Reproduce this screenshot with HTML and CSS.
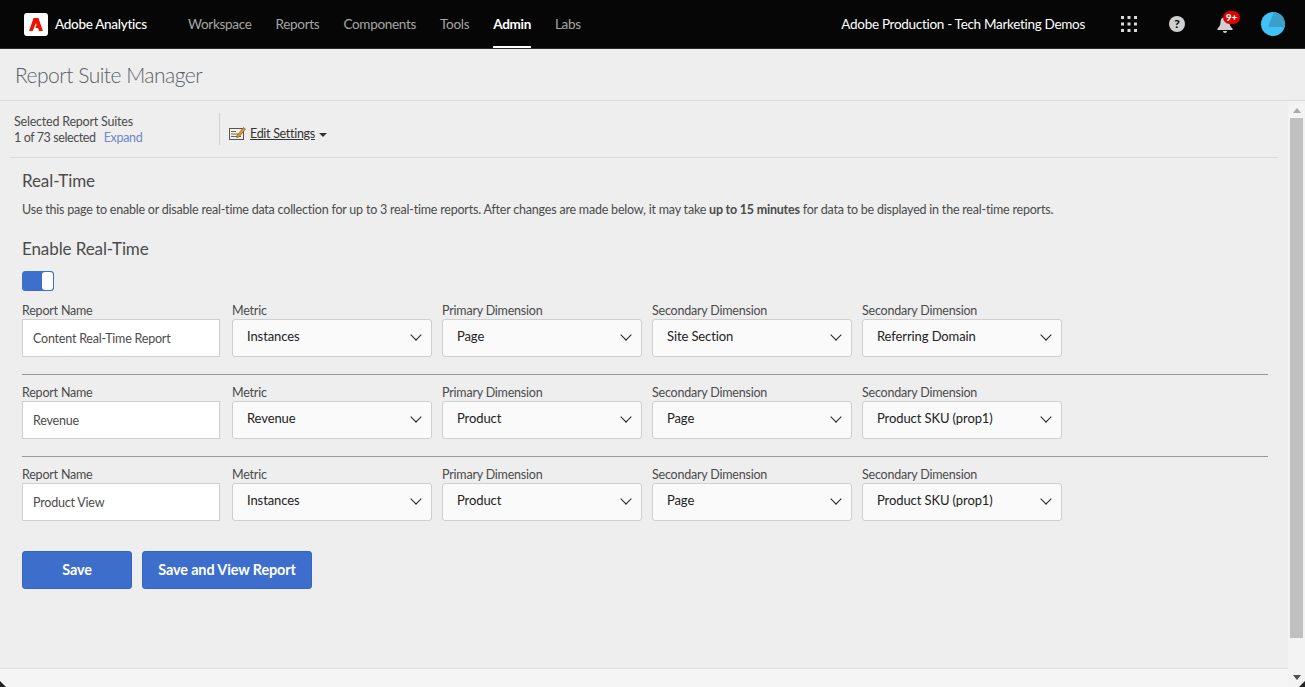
FILE: index.html
```html
<!DOCTYPE html>
<html lang="en">
<head>
    <meta charset="UTF-8">
    <meta name="viewport" content="width=device-width, initial-scale=1.0">
    <title>Report Suite Manager</title>
    <link rel="stylesheet" href="styles.css">
</head>
<body>
    <header class="topbar">
        <div class="brand">
            <span class="brand-logo">
                <svg width="14" height="13" viewBox="0 0 16 15"><path fill="#eb1000" d="M5.200 0H10.800L16 15H11.500L10.300 11.400H7.200L8.600 8 8 5.800 4.200 15H0z"/></svg>
            </span>
            <span class="brand-name">Adobe Analytics</span>
        </div>
        <nav class="main-nav">
            <a href="#">Workspace</a>
            <a href="#">Reports</a>
            <a href="#">Components</a>
            <a href="#">Tools</a>
            <a href="#" class="active">Admin</a>
            <a href="#">Labs</a>
        </nav>
        <div class="top-right">
            <span class="org-name">Adobe Production - Tech Marketing Demos</span>
            <svg class="icon-apps" width="16" height="16" viewBox="0 0 16 16" fill="#d8d8d8">
                <rect x="0" y="0" width="3" height="3"/><rect x="6.500" y="0" width="3" height="3"/><rect x="13" y="0" width="3" height="3"/>
                <rect x="0" y="6.500" width="3" height="3"/><rect x="6.500" y="6.500" width="3" height="3"/><rect x="13" y="6.500" width="3" height="3"/>
                <rect x="0" y="13" width="3" height="3"/><rect x="6.500" y="13" width="3" height="3"/><rect x="13" y="13" width="3" height="3"/>
            </svg>
            <span class="icon-help">?</span>
            <span class="bell">
                <svg width="16" height="16" viewBox="0 0 16 16" fill="#d0d0d0"><path d="M8 0C5 0 3.500 2.400 3.500 5.500c0 3-1.300 4.400-3 6V13h15v-1.500c-1.700-1.600-3-3-3-6C12.500 2.400 11 0 8 0zM6 14h4c0 1.200-.9 2-2 2s-2-.8-2-2z"/></svg>
                <span class="badge">9+</span>
            </span>
            <svg class="avatar" width="24" height="24" viewBox="0 0 24 24"><circle cx="12" cy="12" r="12" fill="#3fc3f7"/><path fill="#3a9fc9" d="M13 0A12 12 0 0 1 24 12V15H7z"/></svg>
        </div>
    </header>

    <div class="page-title">Report Suite Manager</div>

    <div class="body-wrap">
        <div class="left-col">
            <main class="content">
                <div class="toolbar">
                    <div class="selected-suites">
                        <div>Selected Report Suites</div>
                        <div><span class="count">1 of 73 selected</span> <a href="#" class="expand">Expand</a></div>
                    </div>
                    <div class="edit-settings">
                        <svg width="17" height="14" viewBox="0 0 17 14">
                            <rect x=".5" y="2.500" width="14" height="11" fill="#f4f1e6" stroke="#555"/>
                            <path stroke="#666" d="M2 5.500h5M2 8h8M2 10.500h10"/>
                            <path fill="#e0962c" stroke="#7a4a12" stroke-width=".6" d="M8 9.500 14.500 1.500l2 1.500L10 11l-2.300.6z"/>
                        </svg>
                        <a href="#">Edit Settings</a>
                        <span class="caret"></span>
                    </div>
                </div>

                <section class="realtime">
                    <h2>Real-Time</h2>
                    <p class="intro">Use this page to enable or disable real-time data collection for up to 3 real-time reports. After changes are made below, it may take <b>up to 15 minutes</b> for data to be displayed in the real-time reports.</p>
                    <h2 class="enable-title">Enable Real-Time</h2>
                    <div class="toggle"><span class="toggle-knob"></span></div>

                    <div class="report-row">
                        <label>Report Name<input type="text" value="Content Real-Time Report"></label>
                        <label>Metric<span class="select">Instances</span></label>
                        <label>Primary Dimension<span class="select">Page</span></label>
                        <label>Secondary Dimension<span class="select">Site Section</span></label>
                        <label>Secondary Dimension<span class="select">Referring Domain</span></label>
                    </div>
                    <div class="report-row">
                        <label>Report Name<input type="text" value="Revenue"></label>
                        <label>Metric<span class="select">Revenue</span></label>
                        <label>Primary Dimension<span class="select">Product</span></label>
                        <label>Secondary Dimension<span class="select">Page</span></label>
                        <label>Secondary Dimension<span class="select">Product SKU (prop1)</span></label>
                    </div>
                    <div class="report-row last">
                        <label>Report Name<input type="text" value="Product View"></label>
                        <label>Metric<span class="select">Instances</span></label>
                        <label>Primary Dimension<span class="select">Product</span></label>
                        <label>Secondary Dimension<span class="select">Page</span></label>
                        <label>Secondary Dimension<span class="select">Product SKU (prop1)</span></label>
                    </div>

                    <div class="actions">
                        <button class="btn btn-save">Save</button>
                        <button class="btn btn-view">Save and View Report</button>
                    </div>
                </section>
            </main>
            <footer class="footer"></footer>
        </div>
        <aside class="scrollbar">
            <span class="arrow-up"></span>
            <span class="thumb"></span>
            <span class="arrow-down"></span>
        </aside>
    </div>
    <span class="corner corner-left"></span>
    <span class="corner corner-right"></span>
</body>
</html>
```

FILE: styles.css
```css
* {
    box-sizing: border-box;
}
html, body {
    height: 100%;
}
body {
    font-family: Lato, "Open Sans", sans-serif;
    font-size: 12.500px;
    letter-spacing: -0.21px;
    margin: 0;
    padding: 0;
    color: #4b4b4b;
    background-color: #eeeeee;
    display: flex;
    flex-direction: column;
    overflow: hidden;
    position: relative;
}
a {
    text-decoration: none;
}
.topbar {
    height: 49px;
    flex: none;
    display: flex;
    align-items: stretch;
    background: #060606;
    border-bottom: 1px solid #2c2c2c;
    color: #fff;
    font-size: 13.500px;
    letter-spacing: -0.3px;
}
.brand {
    display: flex;
    align-items: center;
    padding-left: 24px;
    width: 188px;
}
.brand-logo {
    width: 24px;
    height: 23px;
    background: #fff;
    border-radius: 3px;
    display: flex;
    align-items: center;
    justify-content: center;
}
.brand-name {
    margin-left: 7px;
    font-weight: 500;
}
.main-nav {
    display: flex;
    gap: 24px;
}
.main-nav a {
    color: #a6a6a6;
    display: flex;
    align-items: center;
    height: 48px;
    padding-top: 2px;
    border-bottom: 2px solid transparent;
}
.main-nav a.active {
    color: #fff;
    font-weight: 700;
    border-bottom-color: #fff;
}
.top-right {
    margin-left: auto;
    display: flex;
    align-items: center;
    padding-right: 20px;
}
.org-name {
    margin-right: 36px;
}
.icon-help {
    width: 16px;
    height: 16px;
    margin-left: 32px;
    border-radius: 50%;
    background: #d0d0d0;
    color: #060606;
    font-weight: 900;
    font-size: 12px;
    line-height: 16px;
    text-align: center;
}
.bell {
    position: relative;
    margin-left: 32px;
    height: 16px;
    margin-top: 2px;
}
.badge {
    position: absolute;
    top: -6px;
    left: 6px;
    width: 17px;
    height: 13px;
    border-radius: 7px;
    background: #e00000;
    color: #fff;
    font-size: 10px;
    font-weight: 900;
    letter-spacing: 0;
    line-height: 13px;
    text-align: center;
}
.avatar {
    margin-left: 28px;
}
.page-title {
    height: 52px;
    flex: none;
    padding: 13px 0 0 15px;
    font-size: 21px;
    letter-spacing: -0.5px;
    font-weight: 300;
    color: #5a5f66;
    border-bottom: 1px solid #dcdcdc;
}
.body-wrap {
    flex: 1;
    min-height: 0;
    display: flex;
}
.left-col {
    flex: 1;
    min-width: 0;
    display: flex;
    flex-direction: column;
}
.content {
    flex: 1;
    min-height: 0;
}
.scrollbar {
    width: 17px;
    flex: none;
    display: flex;
    flex-direction: column;
    align-items: center;
    background: #f3f3f3;
    padding-top: 7px;
}
.arrow-up {
    border: 4px solid transparent;
    border-top: 0;
    border-bottom: 5px solid #a8a8a8;
}
.thumb {
    width: 13px;
    height: 520px;
    margin: 5px 0 0 0;
    background: #c0c0c0;
}
.arrow-down {
    margin-top: 37px;
    border: 4px solid transparent;
    border-bottom: 0;
    border-top: 5px solid #505050;
}
.corner {
    position: absolute;
    bottom: 0;
    width: 0;
    height: 0;
    border-bottom: 6px solid #222;
}
.corner-left {
    left: 0;
    border-right: 6px solid transparent;
}
.corner-right {
    right: 0;
    border-left: 6px solid transparent;
}
.toolbar {
    margin: 0 10px;
    height: 57px;
    border-bottom: 1px solid #dcdcdc;
    display: flex;
    align-items: center;
}
.selected-suites {
    width: 210px;
    padding: 1px 0 0 4px;
    line-height: 16px;
    height: 32px;
    border-right: 1px solid #d0d0d0;
}
.count {
    letter-spacing: -0.4px;
}
.expand {
    color: #6d87c9;
    margin-left: 5px;
    letter-spacing: -0.3px;
}
.edit-settings {
    display: flex;
    align-items: center;
    margin: 8px 0 0 9px;
    gap: 4px;
    letter-spacing: -0.3px;
}
.edit-settings a {
    color: #333;
    text-decoration: underline;
}
.caret {
    border: 4px solid transparent;
    border-bottom: 0;
    border-top: 4px solid #333;
    margin-top: 3px;
}
.realtime {
    padding: 13px 0 0 22px;
}
h2 {
    margin: 0;
    font-size: 17px;
    letter-spacing: -0.1px;
    font-weight: 400;
    line-height: 20px;
    color: #4b4b4b;
}
.intro {
    margin: 10px 0 0;
    line-height: 18px;
}
.enable-title {
    margin-top: 20px;
}
.toggle {
    width: 32px;
    height: 20px;
    margin-top: 12px;
    background: #3f6fcd;
    border: 1px solid #3f6fcd;
    border-radius: 3px;
    display: flex;
    justify-content: flex-end;
}
.toggle-knob {
    width: 11px;
    background: #fff;
    border-radius: 3px;
}
.report-row {
    display: grid;
    grid-template-columns: repeat(5, 200px);
    gap: 10px;
    width: 1246px;
    margin-top: 11px;
    padding-bottom: 17px;
    border-bottom: 1px solid #999;
}
.report-row + .report-row {
    margin-top: 9px;
}
.report-row.last {
    border-bottom: 0;
}
.report-row label {
    display: block;
    line-height: 18px;
}
.report-row input {
    display: block;
    width: 198px;
    height: 38px;
    margin-top: -1px;
    padding: 0 10px;
    background: #fff;
    border: 1px solid #cfcfcf;
    border-radius: 0;
    color: #4b4b4b;
    font: inherit;
    letter-spacing: inherit;
    outline: none;
}
.select {
    display: block;
    position: relative;
    height: 38px;
    margin-top: -1px;
    padding: 0 14px;
    line-height: 32px;
    background: #fafafa;
    border: 1px solid #cfcfcf;
    border-radius: 3px;
    color: #222;
    font-size: 13px;
    letter-spacing: -0.1px;
}
.select::after {
    content: "";
    position: absolute;
    right: 11px;
    top: 11px;
    width: 7px;
    height: 7px;
    border: solid #222;
    border-width: 0 1.500px 1.500px 0;
    transform: rotate(45deg);
}
.actions {
    display: flex;
    gap: 10px;
    margin-top: 13px;
}
.btn {
    height: 38px;
    padding-bottom: 2px;
    background: #3e6ecb;
    border: 1px solid #3566c4;
    border-radius: 3px;
    color: #fff;
    font-family: inherit;
    font-size: 14.400px;
    font-weight: 700;
    letter-spacing: -0.1px;
    cursor: pointer;
}
.btn-save {
    width: 110px;
}
.btn-view {
    width: 170px;
}
.footer {
    height: 19px;
    flex: none;
    background: #f5f5f5;
    border-top: 1px solid #e0e0e0;
}
```
